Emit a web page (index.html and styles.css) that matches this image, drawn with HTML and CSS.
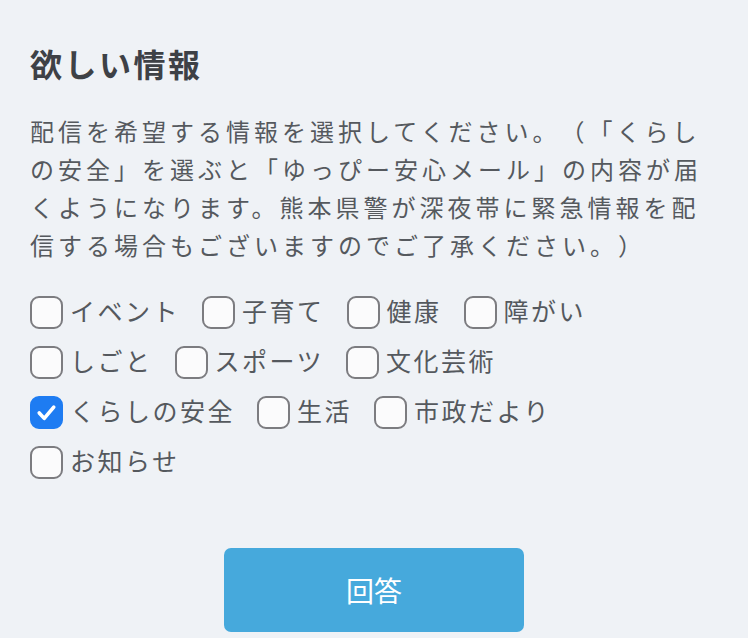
FILE: index.html
```html
<!DOCTYPE html>
<html lang="ja">

<head>
    <meta charset="UTF-8">
    <meta name="viewport" content="width=device-width, initial-scale=1.0">
    <title>欲しい情報</title>
    <link rel="stylesheet" href="styles.css">
</head>

<body>

    <div class="form-box">
        <h2 class="form-title">欲しい情報</h2>

        <p class="form-note">配信を希望する情報を選択してください。（「くらしの安全」を選ぶと「ゆっぴー安心メール」の内容が届くようになります。熊本県警が深夜帯に緊急情報を配信する場合もございますのでご了承ください。）</p>

        <div class="check-list">
            <label class="check-item"><input type="checkbox" name="info"><span>イベント</span></label>
            <label class="check-item"><input type="checkbox" name="info"><span>子育て</span></label>
            <label class="check-item"><input type="checkbox" name="info"><span>健康</span></label>
            <label class="check-item"><input type="checkbox" name="info"><span>障がい</span></label>
            <label class="check-item"><input type="checkbox" name="info"><span>しごと</span></label>
            <label class="check-item"><input type="checkbox" name="info"><span>スポーツ</span></label>
            <label class="check-item"><input type="checkbox" name="info"><span>文化芸術</span></label>
            <label class="check-item"><input type="checkbox" name="info" checked><span>くらしの安全</span></label>
            <label class="check-item"><input type="checkbox" name="info"><span>生活</span></label>
            <label class="check-item"><input type="checkbox" name="info"><span>市政だより</span></label>
            <label class="check-item"><input type="checkbox" name="info"><span>お知らせ</span></label>
        </div>

        <div class="button-row">
            <button type="button" class="submit-button">回答</button>
        </div>
    </div>

</body>

</html>
```

FILE: styles.css
```css
body {
    margin: 0;
    background-color: #eff2f6;
    font-family: "Noto Sans CJK JP", "Noto Sans", sans-serif;
    color: #55595e;
}

.form-box {
    padding: 40px 30px 0;
}

.form-title {
    margin: 0 0 26px;
    font-size: 32px;
    font-weight: bold;
    letter-spacing: 2.5px;
    line-height: 46px;
    color: #3e4146;
}

.form-note {
    margin: 0 0 28px;
    font-size: 24px;
    letter-spacing: 4px;
    line-height: 38px;
    text-spacing-trim: space-all;
}

.check-list {
    display: flex;
    flex-wrap: wrap;
    max-width: 660px;
    row-gap: 13px;
}

.check-item {
    display: flex;
    align-items: center;
    margin-right: 22px;
    font-size: 25px;
    letter-spacing: 2.5px;
    line-height: 37px;
    cursor: pointer;
}

/* チェックボックスを iOS 風に */
.check-item input {
    appearance: none;
    -webkit-appearance: none;
    width: 33px;
    height: 33px;
    margin: 4px 7px 0 0;
    border: 2.5px solid #7c7c80;
    border-radius: 9px;
    background-color: #fbfbfc;
    box-sizing: border-box;
    flex-shrink: 0;
}

.check-item input:checked {
    border-color: #1e7cf2;
    background-color: #1e7cf2;
    background-image: url("data:image/svg+xml,%3Csvg xmlns='http://www.w3.org/2000/svg' viewBox='0 0 32 32'%3E%3Cpath d='M8 16.5l5.5 6L24 10' fill='none' stroke='white' stroke-width='4' stroke-linecap='round' stroke-linejoin='round'/%3E%3C/svg%3E");
    background-size: 100% 100%;
}

.button-row {
    display: flex;
    justify-content: center;
    margin-top: 69px;
}

.submit-button {
    width: 300px;
    height: 84px;
    border: none;
    border-radius: 7px;
    background-color: #46a9dc;
    color: #fff;
    font-family: inherit;
    font-size: 28px;
    cursor: pointer;
}
```
